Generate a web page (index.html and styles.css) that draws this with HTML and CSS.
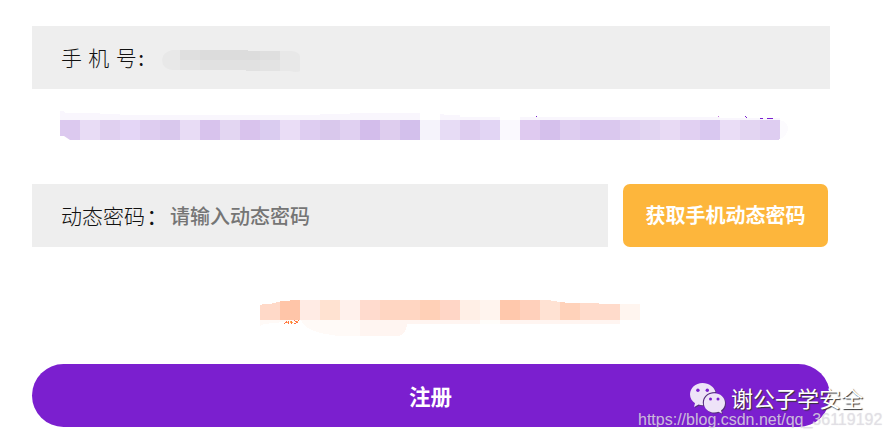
FILE: index.html
```
<!DOCTYPE html>
<html lang="zh-CN">
<head>
<meta charset="utf-8">
<title>注册</title>
<link rel="stylesheet" href="styles.css">
</head>
<body>
<form class="form">
  <div class="field">
    <span class="label phone">手 机 号<span class="colon">:</span></span>
    <svg class="number-mask" width="140" height="24" viewBox="162 48 140 24" shape-rendering="crispEdges">
      <clipPath id="a"><path d="M172 50H248V51H292Q300 52 300 57V71Q297 73 290 71H246V70H172Q162 68 162 60Q163 52 172 50Z"/></clipPath>
      <g clip-path="url(#a)">
        <path fill="#e8e8e8" d="M160 48h142v24H160z"/>
        <path fill="#dfdfdf" d="M180 48h20v12h-20z"/><path fill="#dcdcdc" d="M200 48h60v12h-60z"/><path fill="#dfdfdf" d="M260 48h20v12h-20z"/>
        <path fill="#e4e4e4" d="M180 60h20v12h-20z"/><path fill="#e1e1e1" d="M200 60h60v12h-60z"/><path fill="#e3e3e3" d="M260 60h20v12h-20z"/>
      </g>
    </svg>
  </div>

  <svg class="notice" width="730" height="34" viewBox="60 108 730 34" shape-rendering="crispEdges">
    <path fill="#f9f6fd" d="M60 111h3l3 2h34v1h20v1H320v-1h30v-1h70v7H60zM440 114h4v1h16v2h40v3h-60zM520 117h200v1h60v2H520z"/>
    <path fill="#fcfbfe" d="M780 120q8 2 8 9q-1 7-8 10z"/>
    <clipPath id="b"><path d="M60 120H780V139H779V140H70L64 136H60Z"/></clipPath>
    <g clip-path="url(#b)">
      <path fill="#dcc9ef" d="M60 120h20v20h-20z"/><path fill="#e8dcf5" d="M80 120h20v20h-20z"/><path fill="#e0d0f0" d="M100 120h20v20h-20z"/><path fill="#e4d6f6" d="M120 120h20v20h-20z"/>
      <path fill="#decdf0" d="M140 120h20v20h-20z"/><path fill="#d9c8ed" d="M160 120h20v20h-20z"/><path fill="#e8dcf5" d="M180 120h20v20h-20z"/><path fill="#d8c3ed" d="M200 120h20v20h-20z"/>
      <path fill="#e3d6f2" d="M220 120h20v20h-20z"/><path fill="#d9c3ed" d="M240 120h20v20h-20z"/><path fill="#daccf0" d="M260 120h20v20h-20z"/><path fill="#eaddf6" d="M280 120h20v20h-20z"/>
      <path fill="#decdf1" d="M300 120h20v20h-20z"/><path fill="#d9c8ec" d="M320 120h20v20h-20z"/><path fill="#e0d0f1" d="M340 120h20v20h-20z"/><path fill="#d3bdeb" d="M360 120h20v20h-20z"/>
      <path fill="#decdee" d="M380 120h20v20h-20z"/><path fill="#d3c0ec" d="M400 120h20v20h-20z"/><path fill="#f5f3fb" d="M420 120h20v20h-20z"/><path fill="#e7dcf5" d="M440 120h20v20h-20z"/>
      <path fill="#decdf0" d="M460 120h20v20h-20z"/><path fill="#e2d5f4" d="M480 120h20v20h-20z"/><path fill="#faf9fe" d="M500 120h20v20h-20z"/><path fill="#dfcaf0" d="M520 120h20v20h-20z"/>
      <path fill="#d5c0ec" d="M540 120h20v20h-20z"/><path fill="#decdf0" d="M560 120h20v20h-20z"/><path fill="#dac6f0" d="M580 120h20v20h-20z"/><path fill="#dac8ee" d="M600 120h20v20h-20z"/>
      <path fill="#e0d0f1" d="M620 120h20v20h-20z"/><path fill="#e2d5f2" d="M640 120h20v20h-20z"/><path fill="#e8daf4" d="M660 120h20v20h-20z"/><path fill="#e1d0f2" d="M680 120h20v20h-20z"/>
      <path fill="#d9c8f0" d="M700 120h20v20h-20z"/><path fill="#eaddf6" d="M720 120h20v20h-20z"/><path fill="#e3d5f2" d="M740 120h20v20h-20z"/><path fill="#decdf1" d="M760 120h20v20h-20z"/>
    </g>
    <path fill="#7a1fd0" d="M536 116h1v1h-1zM745 116h1v1h-1zM746 117h1v1h-1zM760 118h3v1h-3zM767 118h6v1h-6z"/>
    <path fill="#c679dd" d="M718 116h1v1h-1z"/>
  </svg>

  <div class="row">
    <label class="field code">
      <span class="label">动态密码<span class="colon">：</span></span>
      <input class="input" type="text" placeholder="请输入动态密码">
    </label>
    <button class="send" type="button">获取手机动态密码</button>
  </div>

  <svg class="error" width="380" height="38" viewBox="260 299 380 38" shape-rendering="crispEdges">
    <path fill="#fffaf7" d="M260 320H620V324H407Q406 335 398 336H338L326 334Q306 331 301 320L274 323L264 324L260 326Z"/>
    <path fill="#fff5f1" d="M360 320H620V324H407Q406 335 398 336H360Z"/>
    <path fill="#fffdfa" d="M480 320h20v4h-20z"/>
    <clipPath id="c"><path d="M260 305H262V304H272V303H276V302H280V301H290V300H551V301H557V302H565V303H599V304H640V320H260Z"/></clipPath>
    <g clip-path="url(#c)">
      <path fill="#ffd9c8" d="M260 300h20v20h-20z"/><path fill="#ffc5a8" d="M280 300h20v20h-20z"/><path fill="#ffebe4" d="M300 300h20v20h-20z"/><path fill="#ffe2d1" d="M320 300h20v20h-20z"/>
      <path fill="#fff1ec" d="M340 300h20v20h-20z"/><path fill="#ffdbce" d="M360 300h20v20h-20z"/><path fill="#ffd6c2" d="M380 300h40v20h-40z"/><path fill="#ffd0b7" d="M420 300h20v20h-20z"/>
      <path fill="#ffd6c6" d="M440 300h20v20h-20z"/><path fill="#ffefe6" d="M460 300h20v20h-20z"/><path fill="#fff4ee" d="M480 300h20v20h-20z"/><path fill="#ffc8ac" d="M500 300h20v20h-20z"/>
      <path fill="#ffd0bb" d="M520 300h20v20h-20z"/><path fill="#ffe2d3" d="M540 300h20v20h-20z"/><path fill="#ffd2ba" d="M560 300h20v20h-20z"/><path fill="#ffdbcb" d="M580 300h40v20h-40z"/><path fill="#fff5ef" d="M620 300h20v20h-20z"/>
    </g>
    <path fill="#ff7448" d="M286 321h1v1h-1zM285 322h2v1h-2zM284 323h1v1h-1zM288 321h1v3h-1zM291 321h1v3h-1zM294 320h1v1h-1zM295 321h2v1h-2zM296 322h2v1h-2zM294 323h2v1h-2zM298 320h1v1h-1z"/>
    <path fill="#ffc04a" d="M287 322h1v1h-1zM290 321h1v2h-1zM297 321h1v1h-1zM292 322h1v1h-1z"/>
  </svg>

  <button class="submit" type="button">注册</button>
</form>

<div class="brand">
  <svg class="wechat" width="38" height="34" viewBox="689 381 38 34">
    <g class="bubbles">
      <path d="M702.500 383C695.500 383 690 388 690 394.300C690 398 692 401.300 695 403.300L694 407L698.500 404.600C700 405.100 702 405.500 703.200 405.300C701.200 398 706.500 392 715.500 392C714.500 387 709 383 702.500 383Z"/>
      <path d="M714.300 393.300C708.200 393.300 703.900 397.500 703.900 402.900C703.900 408.300 708.300 412.500 714.300 412.500C715.800 412.500 717.200 412.300 718.400 411.800L722 413.600L721 410.500C723.500 408.700 725 406 725 402.900C725 397.500 720.300 393.300 714.300 393.300Z"/>
    </g>
    <g class="eyes"><circle cx="697.900" cy="390.300" r="1.700"/><circle cx="707.300" cy="390.300" r="1.700"/><circle cx="710.500" cy="399" r="1.500"/><circle cx="718" cy="399" r="1.500"/></g>
  </svg>
  <span class="brand-name">谢公子学安全</span>
</div>
<div class="source">https://blog.csdn.net/qq_36119192</div>
</body>
</html>
```
FILE: styles.css
```
* { box-sizing: border-box; }

body {
  margin: 0;
  width: 892px;
  height: 439px;
  position: relative;
  overflow: hidden;
  background: #fff;
  font-family: "Noto Sans CJK SC", sans-serif;
}

.form {
  display: flex;
  flex-direction: column;
  width: 798px;
  margin-left: 32px;
  padding-top: 26px;
}

.field {
  display: flex;
  align-items: center;
  height: 63px;
  padding-left: 29px;
  background: #eee;
}

.label {
  flex: none;
  width: 109px;
  padding-bottom: 2px;
  color: #111;
  font-size: 21px;
  font-weight: 300;
  line-height: 30px;
  white-space: nowrap;
}

.phone { width: 101px; word-spacing: 1.7px; }
.colon { margin-left: 1.5px; font-weight: 400; }
.number-mask { display: block; margin-top: 5px; }
.notice { display: block; margin: 19px 0 42px 28px; }
.row { display: flex; gap: 15px; }
.code { width: 576px; }

.input {
  width: 300px;
  padding: 0;
  border: 0;
  outline: 0;
  background: transparent;
  font: 500 20px/30px "Noto Sans CJK SC", sans-serif;
}

.input::placeholder { color: #757575; }

.send,
.submit {
  height: 63px;
  padding: 0;
  border: 0;
  color: #fff;
  font-family: inherit;
}

.send {
  width: 205px;
  padding-bottom: 2px;
  border-radius: 7px;
  background: #fdb63c;
  font-size: 20px;
  font-weight: 700;
}

.error { display: block; margin: 52px 0 27px 228px; }

.submit {
  padding-right: 1px;
  border-radius: 32px;
  background: #7b1fcf;
  font-size: 21.5px;
  font-weight: 700;
}

.brand {
  position: absolute;
  left: 689px;
  top: 381px;
  display: flex;
  gap: 4px;
}

.wechat { display: block; filter: drop-shadow(1px 1px 0 #55317a); }
.bubbles { fill: #eee3f8; }
.eyes { fill: #7b1fcf; }

.brand-name {
  margin-top: -2px;
  color: #fff;
  font-size: 22px;
  line-height: 36px;
  white-space: nowrap;
  text-shadow: 1px 1px 1px #333;
}

.source {
  position: absolute;
  left: 638px;
  top: 410px;
  color: rgba(225, 222, 230, .8);
  font: 16px/20px "Liberation Sans", sans-serif;
  white-space: nowrap;
  text-shadow: 0 0 1px rgba(130, 130, 130, .25);
}
```
